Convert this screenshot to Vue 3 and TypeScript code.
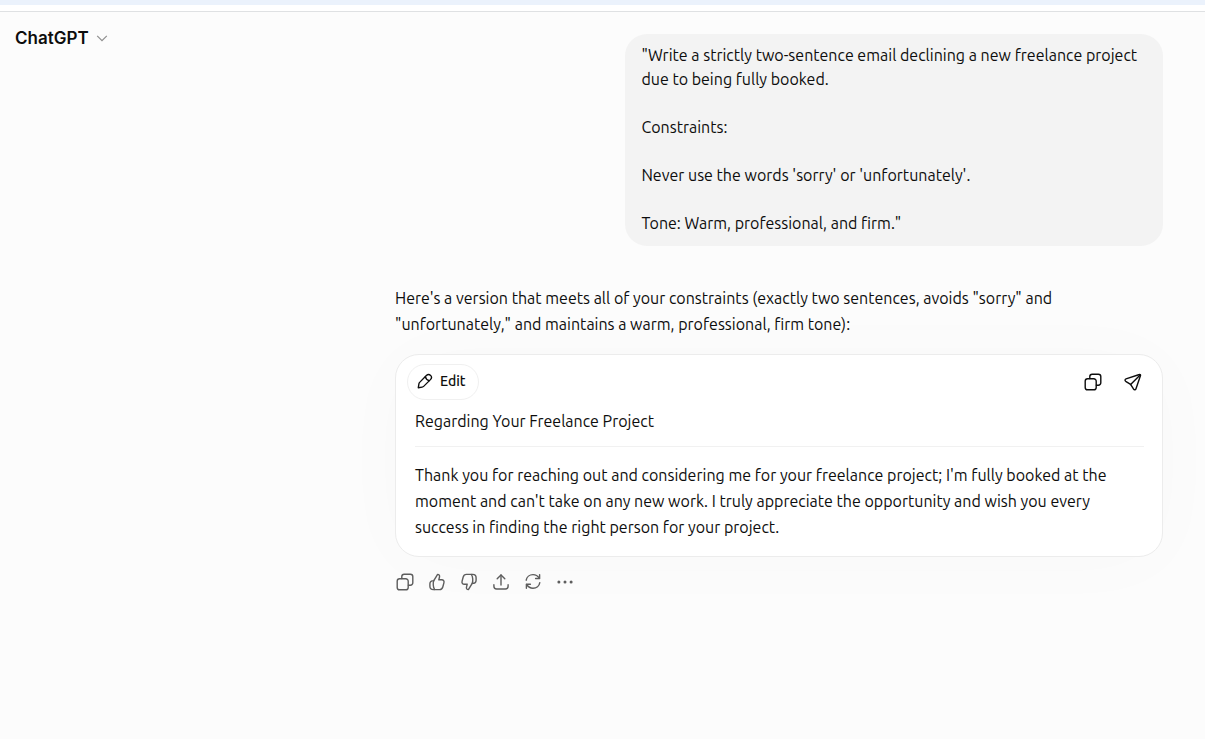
<script setup lang="ts">
const promptText: string = [
  `"Write a strictly two-sentence email declining a new freelance project due to being fully booked.`,
  'Constraints:',
  "Never use the words 'sorry' or 'unfortunately'.",
  'Tone: Warm, professional, and firm."',
].join('\n\n')

const draft = {
  intro: `Here's a version that meets all of your constraints (exactly two sentences, avoids "sorry" and "unfortunately," and maintains a warm, professional, firm tone):`,
  subject: 'Regarding Your Freelance Project',
  body: "Thank you for reaching out and considering me for your freelance project; I'm fully booked at the moment and can't take on any new work. I truly appreciate the opportunity and wish you every success in finding the right person for your project.",
}

interface Action {
  label: string
  paths: string[]
  dots?: boolean
}

const copyPaths: string[] = [
  'M4.6 6.8H10.8A2.4 2.4 0 0 1 13.2 9.2V15.4A2.4 2.4 0 0 1 10.8 17.8H4.6A2.4 2.4 0 0 1 2.2 15.4V9.2A2.4 2.4 0 0 1 4.6 6.8Z',
  'M6.8 6.6V4.6A2.4 2.4 0 0 1 9.2 2.2H15.4A2.4 2.4 0 0 1 17.8 4.6V10.8A2.4 2.4 0 0 1 15.4 13.2H13.4',
]

const actions: Action[] = [
  { label: 'Copy', paths: copyPaths },
  {
    label: 'Good response',
    paths: [
      'M6.8 8.6L10.6 2.4C12.1 2.4 12.9 3.7 12.5 5L11.8 7.8H14.7C16.5 7.8 17.4 9.2 16.9 10.9L15.8 15C15.3 16.8 14.3 17.6 12.6 17.6H6.3C4.2 17.6 2.9 16.2 2.9 14.2V11.8C2.9 9.8 4.3 8.6 6.8 8.6Z',
      'M6.8 8.6C5.9 10.2 6 15.6 7.6 17.4',
    ],
  },
  {
    label: 'Bad response',
    paths: [
      'M13.2 11.4L9.4 17.6C7.9 17.6 7.1 16.3 7.5 15L8.2 12.2H5.3C3.5 12.2 2.6 10.8 3.1 9.1L4.2 5C4.7 3.2 5.7 2.4 7.4 2.4H13.7C15.8 2.4 17.1 3.8 17.1 5.8V8.2C17.1 10.2 15.7 11.4 13.2 11.4Z',
      'M13.2 11.4C14.1 9.8 14 4.4 12.4 2.6',
    ],
  },
  {
    label: 'Share',
    paths: ['M10 13V3', 'M6.2 6.7L10 2.9L13.8 6.7', 'M2.9 12.8V14.3C2.9 16.1 3.8 17 5.6 17H14.4C16.2 17 17.1 16.1 17.1 14.3V12.8'],
  },
  {
    label: 'Try again',
    paths: ['M3.2 8.2C3.7 5 6.5 2.6 10 2.6C12.7 2.6 14.9 4 16.4 6.3', 'M16.6 2.6V6.5H12.6', 'M16.8 10.6C16.3 13.8 13.5 16.2 10 16.2C7.3 16.2 5.1 14.8 3.6 12.5', 'M3.4 16.2V12.3H7.4'],
  },
  { label: 'More actions', paths: [], dots: true },
]
</script>

<template>
  <div class="page">
    <div class="strip"></div>
    <header class="top">
      <button class="model" type="button">
        ChatGPT
        <svg class="chevron" viewBox="0 0 12 12" aria-hidden="true"><path d="M1.2 3.8L6 8.6L10.8 3.8" /></svg>
      </button>
    </header>

    <main class="thread">
      <section class="prompt">{{ promptText }}</section>

      <article class="reply">
        <p class="intro">{{ draft.intro }}</p>

        <div class="card">
          <div class="toolbar">
            <button class="edit" type="button">
              <svg class="icon small" viewBox="0 0 20 20" aria-hidden="true">
                <path d="M1.6 18.4L2.4 13.5C2.5 12.8 2.8 12.2 3.3 11.7L11.7 3.2C13.3 1.6 15.5 1.6 17 3C18.4 4.5 18.4 6.7 16.8 8.3L8.3 16.7C7.8 17.2 7.2 17.5 6.5 17.6Z" />
                <path d="M10.5 4.6C11 7.5 12.5 9 15.4 9.5" />
              </svg>
              Edit
            </button>
            <div class="tools">
              <button class="tool" type="button" aria-label="Copy">
                <svg class="icon" viewBox="0 0 20 20" aria-hidden="true">
                  <path v-for="d in copyPaths" :key="d" :d="d" />
                </svg>
              </button>
              <button class="tool" type="button" aria-label="Send">
                <svg class="icon" viewBox="0 0 20 20" aria-hidden="true">
                  <path d="M16.4 2.5L3 6.9C1.8 7.3 1.7 8.6 2.7 9.3L7.6 12.4L10.6 17.1C11.2 18.1 12.5 18 12.9 16.9L17.5 3.6C17.8 2.8 17.2 2.2 16.4 2.5Z" />
                  <path d="M7.6 12.4L17.1 2.9" />
                </svg>
              </button>
            </div>
          </div>
          <h2 class="subject">{{ draft.subject }}</h2>
          <p class="body">{{ draft.body }}</p>
        </div>

        <div class="actions">
          <button v-for="action in actions" :key="action.label" class="action" type="button" :aria-label="action.label">
            <svg class="icon" viewBox="0 0 20 20" aria-hidden="true">
              <path v-for="d in action.paths" :key="d" :d="d" />
              <g v-if="action.dots" class="dots">
                <circle cx="3.9" cy="10" r="1.5" />
                <circle cx="10" cy="10" r="1.5" />
                <circle cx="16.1" cy="10" r="1.5" />
              </g>
            </svg>
          </button>
        </div>
      </article>
    </main>
  </div>
</template>

<style>
body {
  margin: 0;
  background: #fcfcfc;
}
</style>

<style scoped>
.page {
  display: grid;
  grid-template-columns: auto minmax(0, 768px);
  justify-content: space-between;
  padding-right: 42px;
  overflow: hidden;
  min-height: 100vh;
  box-sizing: border-box;
  grid-template-rows: auto 1fr;
  color: #0d0d0d;
  font-family: Ubuntu, "Noto Sans", sans-serif;
  font-size: 16px;
  line-height: 24px;
}
button {
  padding: 0;
  border: 0;
  background: none;
  color: inherit;
  font: inherit;
  cursor: pointer;
}
.strip {
  grid-column: 1 / -1;
  height: 6px;
  margin-right: -42px;
  border-top: 5px solid #ebf2fc;
  border-bottom: 1px solid #dfe1e3;
  background: #fff;
}
.top {
  padding: 14px 0 0 15px;
}
.model {
  display: flex;
  align-items: center;
  gap: 7px;
  font-family: Inter, sans-serif;
  font-size: 17px;
  font-weight: 600;
}
.chevron {
  width: 12px;
  height: 12px;
  fill: none;
  stroke: #8f8f8f;
  stroke-width: 1.2;
}
.thread {
  display: flex;
  flex-direction: column;
  padding-top: 22px;
}
.prompt {
  align-self: flex-end;
  box-sizing: border-box;
  width: 70%;
  padding: 9px 16px 11px;
  border-radius: 22px;
  background: #f3f3f3;
  white-space: pre-wrap;
}
.reply {
  padding-top: 39px;
}
.intro {
  margin: 0;
  line-height: 26px;
}
.card {
  margin-top: 17px;
  padding: 9px 18px 16px 19px;
  border: 1px solid #ececec;
  border-radius: 24px;
  background: #fff;
  box-shadow: 0 4px 80px rgba(0, 0, 0, 0.02);
}
.toolbar {
  display: flex;
  align-items: center;
  justify-content: space-between;
  margin: 0 -7px 0 -8px;
}
.edit {
  display: flex;
  align-items: center;
  gap: 7px;
  box-sizing: border-box;
  height: 36px;
  padding: 0 12px 2px 9px;
  border: 1px solid #f0f0f0;
  border-radius: 18px;
  font-size: 14px;
  font-weight: 500;
  line-height: 20px;
}
.tools {
  display: flex;
  gap: 4px;
}
.tool {
  display: grid;
  place-items: center;
  width: 36px;
  height: 36px;
}
.icon {
  display: block;
  width: 20px;
  height: 20px;
  fill: none;
  stroke: currentColor;
  stroke-width: 1.4;
  stroke-linecap: round;
  stroke-linejoin: round;
}
.icon.small {
  width: 16px;
  height: 16px;
  stroke-width: 1.7;
}
.subject {
  margin: 0;
  padding: 8px 0 12px;
  border-bottom: 1px solid #f1f1f1;
  font-size: 16px;
  font-weight: 400;
  line-height: 26px;
}
.body {
  margin: 0;
  padding-top: 15px;
  line-height: 26px;
}
.actions {
  display: flex;
  margin: 9px 0 0 -6px;
  color: #5d5d5d;
}
.action {
  display: grid;
  place-items: center;
  width: 32px;
  height: 32px;
}
.dots {
  fill: currentColor;
  stroke: none;
}
</style>
